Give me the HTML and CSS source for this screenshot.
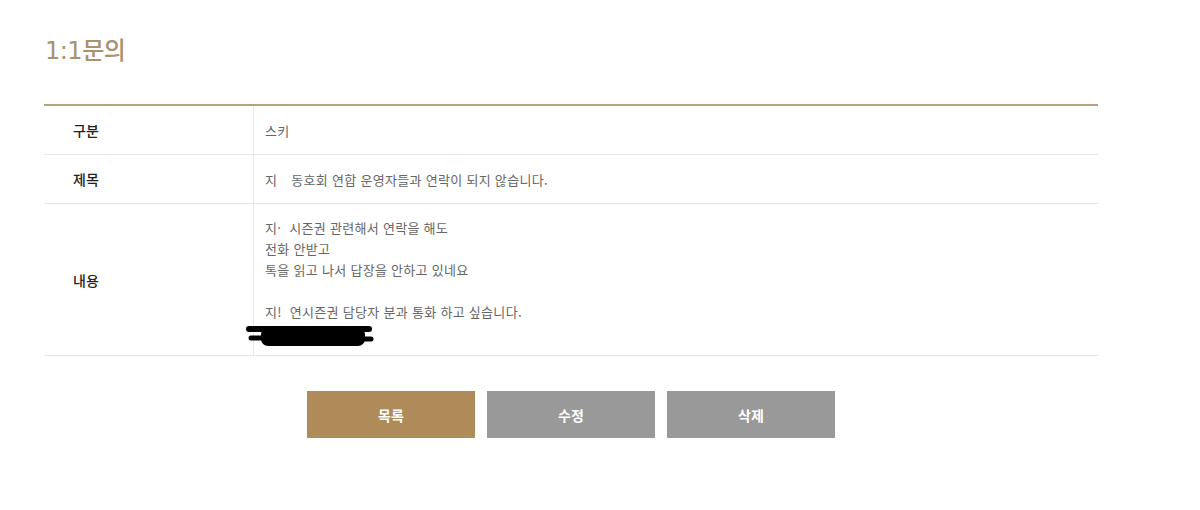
FILE: index.html
```html
<!DOCTYPE html>
<html lang="ko">
<head>
<meta charset="utf-8">
<title>1:1문의</title>
<link rel="stylesheet" href="styles.css">
</head>
<body>
<div class="page">
  <h1 class="title">1:1문의</h1>
  <div class="board">
    <div class="row">
      <div class="label">구분</div>
      <div class="value">스키</div>
    </div>
    <div class="row">
      <div class="label">제목</div>
      <div class="value">지<span class="erase"></span>동호회 연합 운영자들과 연락이 되지 않습니다.</div>
    </div>
    <div class="row">
      <div class="label">내용</div>
      <div class="value content">
        <p>지·<span class="erase small"></span>시즌권 관련해서 연락을 해도</p>
        <p>전화 안받고</p>
        <p>톡을 읽고 나서 답장을 안하고 있네요</p>
        <p>&nbsp;</p>
        <p>지!<span class="erase small"></span>연시즌권 담당자 분과 통화 하고 싶습니다.</p>
        <p>&nbsp;</p>
        <svg class="redact" width="130" height="24" viewBox="0 0 130 24">
          <path d="M4 5 L124 5" stroke="#000" stroke-width="6" stroke-linecap="round"/>
          <rect x="16" y="3" width="104" height="19" rx="7" fill="#000"/>
          <path d="M6 14 L30 14" stroke="#000" stroke-width="5" stroke-linecap="round"/>
          <path d="M108 15 L126 15" stroke="#000" stroke-width="5" stroke-linecap="round"/>
        </svg>
      </div>
    </div>
  </div>
  <div class="actions">
    <button class="btn btn-list">목록</button>
    <button class="btn btn-gray">수정</button>
    <button class="btn btn-gray">삭제</button>
  </div>
</div>
</body>
</html>
```

FILE: styles.css
```css
html, body {
  margin: 0;
  padding: 0;
  background: #ffffff;
}

body {
  font-family: "DejaVu Sans", "Noto Sans CJK KR", sans-serif;
  color: #666;
}

.page {
  width: 1054px;
  margin-left: 44px;
  padding-top: 35px;
}

.title {
  margin: 0 0 37px 1px;
  font-size: 24px;
  line-height: 32px;
  font-weight: 500;
  color: #a8926f;
  letter-spacing: -0.5px;
}

.board {
  border-top: 2px solid #b4a27f;
}

.row {
  display: grid;
  grid-template-columns: 210px 1fr;
  border-bottom: 1px solid #e6e6e6;
}

.label {
  display: flex;
  align-items: center;
  padding-left: 29px;
  border-right: 1px solid #e6e6e6;
  font-family: "Noto Sans CJK KR", sans-serif;
  font-size: 14px;
  font-weight: 500;
  color: #222;
}

.value {
  padding: 0 12px 0 11px;
  height: 48px;
  display: flex;
  align-items: center;
  font-family: "Noto Sans CJK KR", sans-serif;
  font-size: 13px;
  letter-spacing: 0.3px;
  color: #666;
}

.content {
  position: relative;
  display: block;
  height: auto;
  padding: 13px 12px 12px 11px;
}

.content p {
  margin: 0;
  line-height: 21px;
}

.erase {
  display: inline-block;
  width: 14px;
}

.erase.small {
  width: 8px;
}

.redact {
  position: absolute;
  left: -9px;
  top: 120px;
}

.actions {
  display: flex;
  justify-content: center;
  gap: 12px;
  margin-top: 35px;
}

.btn {
  width: 168px;
  height: 47px;
  border: 0;
  padding: 0;
  font-family: "Noto Sans CJK KR", sans-serif;
  font-size: 14px;
  font-weight: bold;
  color: #fff;
  cursor: pointer;
}

.btn-list {
  background: #b08b5a;
}

.btn-gray {
  background: #999999;
}
```
